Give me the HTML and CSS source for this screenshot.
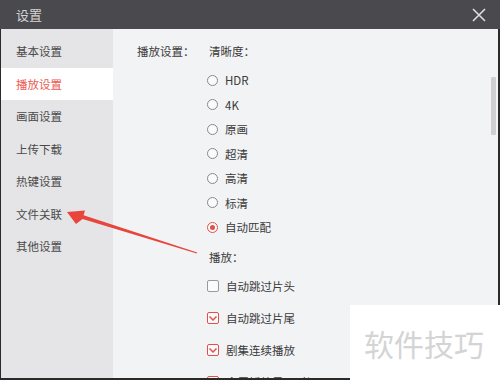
FILE: index.html
```html
<!DOCTYPE html>
<html lang="zh-CN">
<head>
  <meta charset="UTF-8" />
  <title>设置</title>
  <link rel="stylesheet" href="styles.css">
</head>
<body>
  <div class="window">
    <div class="titlebar">
      <span class="title">设置</span>
      <svg class="close" width="14" height="14" viewBox="0 0 14 14">
        <path d="M1 1 L13 13 M13 1 L1 13" stroke="#dcdcdc" stroke-width="1.6" fill="none" />
      </svg>
    </div>

    <div class="frame">
      <ul class="nav">
        <li>基本设置</li>
        <li class="active">播放设置</li>
        <li>画面设置</li>
        <li>上传下载</li>
        <li>热键设置</li>
        <li>文件关联</li>
        <li>其他设置</li>
      </ul>

      <div class="panel">
        <div class="panel-main">
          <div class="section-label">播放设置：</div>
          <div class="section-body">
            <div class="group-title">清晰度：</div>
            <div class="option"><span class="radio"></span>HDR</div>
            <div class="option"><span class="radio"></span>4K</div>
            <div class="option"><span class="radio"></span>原画</div>
            <div class="option"><span class="radio"></span>超清</div>
            <div class="option"><span class="radio"></span>高清</div>
            <div class="option"><span class="radio"></span>标清</div>
            <div class="option"><span class="radio on"></span>自动匹配</div>

            <div class="group-title second">播放：</div>
            <div class="option check-row"><span class="check"></span>自动跳过片头</div>
            <div class="option check-row"><span class="check on"><svg width="10" height="10" viewBox="0 0 10 10"><path d="M1.5 3.5 L5 7 L8.5 3.5" stroke="#e0514a" stroke-width="1.5" fill="none" /></svg></span>自动跳过片尾</div>
            <div class="option check-row"><span class="check on"><svg width="10" height="10" viewBox="0 0 10 10"><path d="M1.5 3.5 L5 7 L8.5 3.5" stroke="#e0514a" stroke-width="1.5" fill="none" /></svg></span>剧集连续播放</div>
            <div class="option check-row"><span class="check on"><svg width="10" height="10" viewBox="0 0 10 10"><path d="M1.5 3.5 L5 7 L8.5 3.5" stroke="#e0514a" stroke-width="1.5" fill="none" /></svg></span>全屏播放显示时间</div>
          </div>
        </div>
        <div class="scrolltrack"><div class="thumb"></div></div>
      </div>
    </div>

    <div class="watermark">软件技巧</div>

    <svg class="arrow" width="500" height="380" viewBox="0 0 500 380">
      <polygon points="67,212 85,210.5 83.6,215.2 197.2,252.4 196.8,253.6 82.6,219 76,224" fill="#e8453c" />
    </svg>
  </div>
</body>
</html>
```

FILE: styles.css
```css
:root {
  --title-bg: #4a4a4e;
  --frame: #2a2a2a;
  --nav-bg: #e5e5e7;
  --panel-bg: #f2f3f5;
  --text: #3a3a3a;
  --red: #e0514a;
}

* {
  box-sizing: border-box;
}

body {
  margin: 0;
  width: 500px;
  height: 380px;
  overflow: hidden;
  font-family: "Noto Sans CJK SC", "Noto Sans", sans-serif;
  font-size: 11.5px;
  color: var(--text);
  background: var(--panel-bg);
}

.window {
  position: relative;
  width: 500px;
  height: 380px;
  display: flex;
  flex-direction: column;
}

.titlebar {
  height: 29px;
  flex: none;
  display: flex;
  align-items: center;
  justify-content: space-between;
  padding: 0 14px 0 16px;
  background: var(--title-bg);
}

.title {
  font-size: 13px;
  color: #d4d4d4;
}

.frame {
  flex: 1;
  display: flex;
  min-height: 0;
  overflow: hidden;
  border-left: 1px solid var(--frame);
  border-right: 2px solid var(--frame);
  border-bottom: 2px solid var(--frame);
}

.nav {
  list-style: none;
  margin: 0;
  padding: 6px 0 0;
  width: 112px;
  flex: none;
  background: var(--nav-bg);
}

.nav li {
  height: 32.5px;
  line-height: 32.5px;
  padding-left: 15px;
  color: #4a4a4a;
}

.nav li.active {
  background: #fff;
  color: #ec5a53;
}

.panel {
  flex: 1;
  display: flex;
  background: var(--panel-bg);
}

.panel-main {
  flex: 1;
  display: flex;
  align-items: flex-start;
  padding: 10px 0 0 24px;
}

.section-label {
  width: 70px;
  height: 24px;
  line-height: 24px;
  flex: none;
}

.section-body {
  display: flex;
  flex-direction: column;
}

.section-body > * {
  flex: none;
}

.group-title {
  height: 24px;
  line-height: 24px;
  padding-left: 2px;
  margin-bottom: 4.75px;
}

.group-title.second {
  margin-top: 6px;
  margin-bottom: 1px;
}

.option {
  height: 24.5px;
  display: flex;
  align-items: center;
}

.option.check-row {
  height: 32px;
}

.radio {
  width: 11px;
  height: 11px;
  margin-right: 7px;
  border: 1px solid #888;
  border-radius: 50%;
  background: #fbfbfb;
  display: flex;
  align-items: center;
  justify-content: center;
}

.radio.on {
  border-color: var(--red);
}

.radio.on::after {
  content: "";
  width: 5px;
  height: 5px;
  border-radius: 50%;
  background: var(--red);
}

.check {
  width: 12px;
  height: 12px;
  margin-right: 7px;
  border: 1px solid #9a9a9a;
  border-radius: 2px;
  background: #fbfbfb;
  display: flex;
  align-items: center;
  justify-content: center;
}

.check.on {
  border-color: var(--red);
}

.scrolltrack {
  width: 7px;
  flex: none;
  padding-top: 48px;
}

.thumb {
  width: 5px;
  height: 58px;
  border-radius: 1px;
  background: #cfcfcf;
}

.watermark {
  position: absolute;
  left: 350px;
  top: 305px;
  width: 150px;
  height: 75px;
  display: flex;
  align-items: center;
  justify-content: center;
  padding-right: 2px;
  background: #fff;
  color: #d4d4d4;
  font-size: 30px;
}

.arrow {
  position: absolute;
  left: 0;
  top: 0;
  pointer-events: none;
}
```
